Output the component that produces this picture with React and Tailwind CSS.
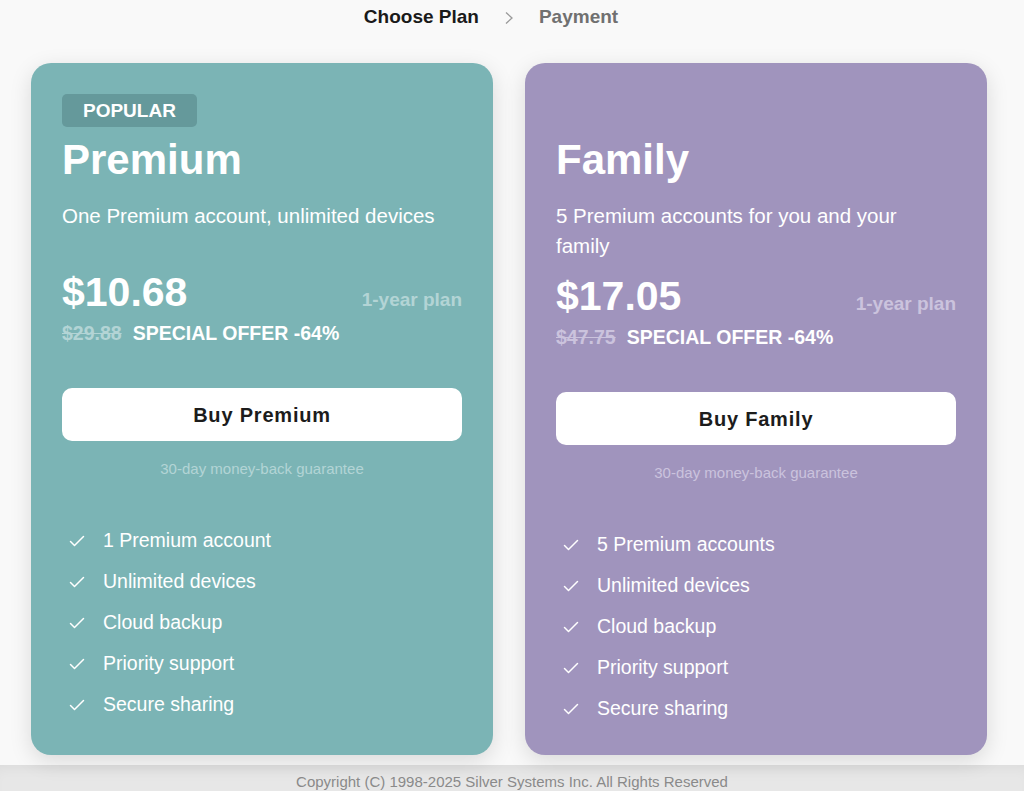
const plans = [
  {
    name: "Premium",
    popular: true,
    desc: "One Premium account, unlimited devices",
    price: "$10.68",
    old: "$29.88",
    button: "Buy Premium",
    bg: "bg-[#7bb4b5]",
    faint: "text-[#b3d4d5]",
    features: ["1 Premium account", "Unlimited devices", "Cloud backup", "Priority support", "Secure sharing"],
  },
  {
    name: "Family",
    popular: false,
    desc: "5 Premium accounts for you and your family",
    price: "$17.05",
    old: "$47.75",
    button: "Buy Family",
    bg: "bg-[#a094bd]",
    faint: "text-[#cbc3dd]",
    features: ["5 Premium accounts", "Unlimited devices", "Cloud backup", "Priority support", "Secure sharing"],
  },
];

function Check() {
  return (
    <svg width="16" height="16" viewBox="0 0 16 16" fill="none" className="ml-[7px] shrink-0">
      <polyline points="1.5,8.5 5.5,12.5 14.5,3.5" stroke="white" strokeWidth="1.5" strokeLinecap="round" strokeLinejoin="round" />
    </svg>
  );
}

function PlanCard({ plan }) {
  return (
    <div className={`${plan.bg} h-[692px] rounded-[20px] px-[31px] pt-[31px] text-white shadow-[0_6px_22px_rgba(0,0,0,0.13)]`}>
      {plan.popular ? (
        <div className="inline-flex h-[33px] items-center rounded-[5px] bg-[#65999b] px-[21px] text-[19px] font-bold leading-none">
          POPULAR
        </div>
      ) : (
        <div className="h-[33px]" />
      )}
      <h2 className="mt-[8px] text-[42px] font-bold leading-[50px]">{plan.name}</h2>
      <p className="mt-[16px] min-h-[56px] max-w-[380px] text-[20.5px] leading-[30px]">{plan.desc}</p>
      <div className="mt-[11px] flex items-baseline justify-between">
        <span className="text-[41px] font-bold leading-[48px]">{plan.price}</span>
        <span className={`${plan.faint} text-[19px] font-bold`}>1-year plan</span>
      </div>
      <div className="mt-[5px] flex items-center gap-[11px] text-[19.5px] font-bold leading-[24px]">
        <span className={`${plan.faint} line-through`}>{plan.old}</span>
        <span>SPECIAL OFFER -64%</span>
      </div>
      <button className="mt-[43px] flex h-[53px] w-full items-center justify-center rounded-[10px] bg-white text-[20px] font-bold tracking-[0.8px] text-[#1c1c1c]">
        {plan.button}
      </button>
      <p className={`${plan.faint} mt-[18px] text-center text-[15px] leading-[20px]`}>30-day money-back guarantee</p>
      <ul className="mt-[41px]">
        {plan.features.map((f) => (
          <li key={f} className="flex h-[41px] items-center">
            <Check />
            <span className="ml-[18px] text-[19.5px]">{f}</span>
          </li>
        ))}
      </ul>
    </div>
  );
}

export default function App() {
  return (
    <div className="min-h-screen overflow-hidden bg-[#f9f9f9] font-['Liberation_Sans',Arial,sans-serif]">
      <header className="flex h-[35px] items-center justify-center pr-[42px] text-[19px] font-bold">
        <span className="text-[#1a1a1a]">Choose Plan</span>
        <svg width="10" height="14" viewBox="0 0 10 14" fill="none" className="mx-[25px]">
          <polyline points="2,1.5 8,7 2,12.5" stroke="#9a9a9a" strokeWidth="1.3" />
        </svg>
        <span className="text-[#707070]">Payment</span>
      </header>
      <main className="ml-[31px] mt-[28px] grid w-[956px] grid-cols-2 gap-[32px]">
        {plans.map((p) => (
          <PlanCard key={p.name} plan={p} />
        ))}
      </main>
      <footer className="mt-[10px] bg-[#e7e7e7] pt-[8px] pb-[20px] text-center text-[15px] leading-[18px] text-[#8a8a8a] shadow-[inset_0_10px_14px_-8px_rgba(0,0,0,0.06)]">
        Copyright (C) 1998-2025 Silver Systems Inc. All Rights Reserved
      </footer>
    </div>
  );
}
